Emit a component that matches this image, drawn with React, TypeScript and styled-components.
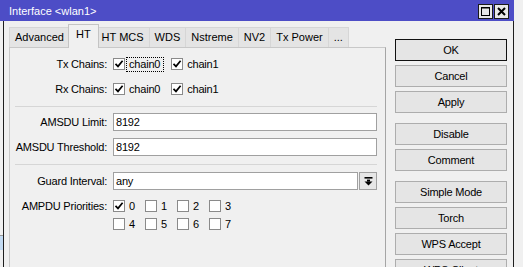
import styled, { createGlobalStyle } from 'styled-components';

const Global = createGlobalStyle`
  html, body {
    margin: 0;
    padding: 0;
    background: #f0f0f0;
  }
  body {
    font-family: "Liberation Sans", Arial, sans-serif;
    font-size: 11px;
    letter-spacing: -0.2px;
    color: #000;
  }
  * { box-sizing: border-box; }
`;

const Screen = styled.div`
  width: 523px;
  height: 267px;
  overflow: hidden;
  background: #f0f0f0;
`;

const Window = styled.div`
  width: 514px;
  height: 100%;
  display: flex;
  flex-direction: column;
`;

const TitleBar = styled.div`
  height: 21px;
  flex: none;
  display: flex;
  align-items: center;
  padding: 1px 5px 0 9px;
  background: #4d4dc6;
  color: #fff;
`;

const Title = styled.span`
  flex: 1;
  letter-spacing: 0;
`;

const TitleButtons = styled.div`
  display: flex;
  gap: 1px;
`;

const TitleButton = styled.div`
  width: 15px;
  height: 15px;
  border: 1px solid #1a1a1a;
  background: #e8e8e8;
  display: flex;
  align-items: center;
  justify-content: center;
`;

const Frame = styled.div`
  flex: 1;
  display: flex;
  min-height: 0;
`;

const BackStrip = styled.div`
  width: 3px;
  flex: none;
  background: #f0f0f0;
  padding-top: 214px;
`;

const BackSelection = styled.div`
  height: 15px;
  background: #c3dbf3;
  border-top: 1px solid #9a9a9a;
`;

const Content = styled.div`
  flex: 1;
  display: flex;
  gap: 9px;
  padding-left: 5px;
  border-left: 1px solid #1e1e1e;
  border-right: 1px solid #1e1e1e;
  background: #f0f0f0;
`;

const Main = styled.div`
  width: 377px;
  flex: none;
  display: flex;
  flex-direction: column;
  padding-top: 3px;
`;

const TabStrip = styled.div`
  height: 23px;
  display: flex;
  align-items: flex-end;
  position: relative;
  z-index: 1;
`;

const Tab = styled.div<{ $active?: boolean }>`
  height: ${(p) => (p.$active ? '24px' : '20px')};
  margin: ${(p) => (p.$active ? '0 -2px -1px -2px' : '0 0 0 -1px')};
  padding: ${(p) => (p.$active ? '3px 7px 0' : '3px 5px 0')};
  border: 1px solid ${(p) => (p.$active ? '#c4c4c4' : '#d6d6d6')};
  border-bottom: none;
  background: ${(p) => (p.$active ? '#f0f0f0' : '#e4e4e4')};
  position: relative;
  z-index: ${(p) => (p.$active ? 2 : 1)};
  white-space: nowrap;
  letter-spacing: 0;
  &:first-child {
    margin-left: 0;
  }
`;

const Panel = styled.div`
  flex: 1;
  border: 1px solid #c8c8c8;
  border-right-color: #a5a5a5;
  border-bottom: none;
  background: #f0f0f0;
  padding: 7px 8px 0 0;
`;

const Section = styled.div`
  display: flex;
  flex-direction: column;
  gap: 7px;
`;

const Row = styled.div`
  display: grid;
  grid-template-columns: 97px 1fr;
  column-gap: 6px;
  align-items: start;
`;

const Label = styled.div`
  height: 18px;
  line-height: 18px;
  text-align: right;
  white-space: nowrap;
`;

const Separator = styled.div<{ $after?: number }>`
  height: 1px;
  background: #d6d6d6;
  margin: 8px 0 ${(p) => p.$after ?? 6}px 5px;
`;

const Checks = styled.div`
  height: 18px;
  display: flex;
  align-items: center;
  gap: 7px;
`;

const CheckItem = styled.label`
  display: inline-flex;
  align-items: center;
  gap: 1px;
`;

const Box = styled.span`
  width: 12px;
  height: 12px;
  flex: none;
  border: 1px solid #8a8a8a;
  background: #fff;
  display: inline-flex;
  align-items: center;
  justify-content: center;
`;

const CheckText = styled.span<{ $focus?: boolean }>`
  padding: 1px 3px 1px 2px;
  border: 1px dotted ${(p) => (p.$focus ? '#000' : 'transparent')};
  line-height: 11px;
`;

const Grid = styled.div`
  display: grid;
  grid-template-columns: repeat(4, 32px);
  grid-auto-rows: 18px;
  align-items: center;
`;

const Field = styled.div`
  height: 18px;
  border: 1px solid #a0a0a0;
  background: #fff;
  padding: 0 2px;
  line-height: 16px;
`;

const SelectWrap = styled.div`
  display: flex;
  gap: 1px;
`;

const SelectField = styled(Field)`
  flex: 1;
`;

const DropButton = styled.div`
  width: 18px;
  height: 18px;
  flex: none;
  border: 1px solid #a0a0a0;
  background: #e6e6e6;
  display: flex;
  align-items: center;
  justify-content: center;
`;

const Side = styled.div`
  width: 112px;
  flex: none;
  display: flex;
  flex-direction: column;
  gap: 4px;
  padding-top: 18px;
`;

const Button = styled.div<{ $default?: boolean; $group?: boolean }>`
  height: 22px;
  flex: none;
  border: 1px solid ${(p) => (p.$default ? '#111' : '#adadad')};
  background: #e5e5e5;
  display: flex;
  align-items: center;
  justify-content: center;
  margin-top: ${(p) => (p.$group ? '6px' : '0')};
`;

const Tick = () => (
  <svg width="10" height="10" viewBox="0 0 10 10">
    <path d="M1.5 4.8 L4 7.4 L8.6 1.8" fill="none" stroke="#000" strokeWidth="1.7" />
  </svg>
);

const Check = ({ label, checked, focus }: { label: string; checked?: boolean; focus?: boolean }) => (
  <CheckItem>
    <Box>{checked && <Tick />}</Box>
    <CheckText $focus={focus}>{label}</CheckText>
  </CheckItem>
);

const tabs = ['Advanced', 'HT', 'HT MCS', 'WDS', 'Nstreme', 'NV2', 'Tx Power', '...'];

const buttons: { text: string; group?: boolean; default?: boolean }[] = [
  { text: 'OK', default: true },
  { text: 'Cancel' },
  { text: 'Apply' },
  { text: 'Disable', group: true },
  { text: 'Comment' },
  { text: 'Simple Mode', group: true },
  { text: 'Torch' },
  { text: 'WPS Accept' },
  { text: 'WPS Client' },
];

const priorities = [0, 1, 2, 3, 4, 5, 6, 7];

export default function App() {
  return (
    <Screen>
      <Global />
      <Window>
        <TitleBar>
          <Title>Interface &lt;wlan1&gt;</Title>
          <TitleButtons>
            <TitleButton>
              <svg width="11" height="11" viewBox="0 0 11 11">
                <rect x="1.5" y="1.5" width="8" height="8" fill="none" stroke="#000" strokeWidth="1" />
                <rect x="1" y="1" width="9" height="1.5" fill="#000" />
              </svg>
            </TitleButton>
            <TitleButton>
              <svg width="9" height="9" viewBox="0 0 9 9">
                <path d="M1 1 L8 8 M8 1 L1 8" stroke="#000" strokeWidth="2" />
              </svg>
            </TitleButton>
          </TitleButtons>
        </TitleBar>
        <Frame>
          <BackStrip>
            <BackSelection />
          </BackStrip>
          <Content>
            <Main>
              <TabStrip>
                {tabs.map((t) => (
                  <Tab key={t} $active={t === 'HT'}>
                    {t}
                  </Tab>
                ))}
              </TabStrip>
              <Panel>
                <Section>
                  <Row>
                    <Label>Tx Chains:</Label>
                    <Checks>
                      <Check label="chain0" checked focus />
                      <Check label="chain1" checked />
                    </Checks>
                  </Row>
                  <Row>
                    <Label>Rx Chains:</Label>
                    <Checks>
                      <Check label="chain0" checked />
                      <Check label="chain1" checked />
                    </Checks>
                  </Row>
                </Section>
                <Separator $after={6} />
                <Section>
                  <Row>
                    <Label>AMSDU Limit:</Label>
                    <Field>8192</Field>
                  </Row>
                  <Row>
                    <Label>AMSDU Threshold:</Label>
                    <Field>8192</Field>
                  </Row>
                </Section>
                <Separator $after={7} />
                <Section>
                  <Row>
                    <Label>Guard Interval:</Label>
                    <SelectWrap>
                      <SelectField>any</SelectField>
                      <DropButton>
                        <svg width="9" height="9" viewBox="0 0 9 9">
                          <rect x="0.5" y="0" width="8" height="1.6" fill="#000" />
                          <rect x="3" y="2.6" width="3" height="2" fill="#000" />
                          <polygon points="0.5,4.4 8.5,4.4 4.5,8.6" fill="#000" />
                        </svg>
                      </DropButton>
                    </SelectWrap>
                  </Row>
                  <Row>
                    <Label>AMPDU Priorities:</Label>
                    <Grid>
                      {priorities.map((n) => (
                        <Check key={n} label={String(n)} checked={n === 0} />
                      ))}
                    </Grid>
                  </Row>
                </Section>
              </Panel>
            </Main>
            <Side>
              {buttons.map((b) => (
                <Button key={b.text} $default={b.default} $group={b.group}>
                  {b.text}
                </Button>
              ))}
            </Side>
          </Content>
        </Frame>
      </Window>
    </Screen>
  );
}
